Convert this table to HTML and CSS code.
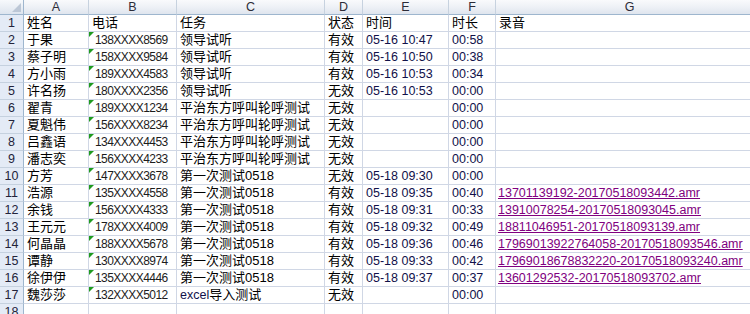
FILE: index.html
```html
<!DOCTYPE html>
<html lang="zh-CN">
<head>
<meta charset="utf-8">
<title>录音表</title>
<link rel="stylesheet" href="styles.css">
</head>
<body>
<div class="sheet">
  <div class="corner"></div>
  <div class="ch">A</div><div class="ch">B</div><div class="ch">C</div><div class="ch">D</div><div class="ch">E</div><div class="ch">F</div><div class="ch last">G</div>

  <div class="rh">1</div><div class="c">姓名</div><div class="c">电话</div><div class="c">任务</div><div class="c">状态</div><div class="c">时间</div><div class="c">时长</div><div class="c">录音</div>

  <div class="rh">2</div><div class="c">于果</div><div class="c ph">138XXXX8569</div><div class="c">领导试听</div><div class="c">有效</div><div class="c lt">05-16 10:47</div><div class="c lt">00:58</div><div class="c"></div>
  <div class="rh">3</div><div class="c">蔡子明</div><div class="c ph">158XXXX9584</div><div class="c">领导试听</div><div class="c">有效</div><div class="c lt">05-16 10:50</div><div class="c lt">00:38</div><div class="c"></div>
  <div class="rh">4</div><div class="c">方小雨</div><div class="c ph">189XXXX4583</div><div class="c">领导试听</div><div class="c">有效</div><div class="c lt">05-16 10:53</div><div class="c lt">00:34</div><div class="c"></div>
  <div class="rh">5</div><div class="c">许名扬</div><div class="c ph">180XXXX2356</div><div class="c">领导试听</div><div class="c">无效</div><div class="c lt">05-16 10:53</div><div class="c lt">00:00</div><div class="c"></div>
  <div class="rh">6</div><div class="c">翟青</div><div class="c ph">189XXXX1234</div><div class="c">平治东方呼叫轮呼测试</div><div class="c">无效</div><div class="c lt"></div><div class="c lt">00:00</div><div class="c"></div>
  <div class="rh">7</div><div class="c">夏魁伟</div><div class="c ph">156XXXX8234</div><div class="c">平治东方呼叫轮呼测试</div><div class="c">无效</div><div class="c lt"></div><div class="c lt">00:00</div><div class="c"></div>
  <div class="rh">8</div><div class="c">吕鑫语</div><div class="c ph">134XXXX4453</div><div class="c">平治东方呼叫轮呼测试</div><div class="c">无效</div><div class="c lt"></div><div class="c lt">00:00</div><div class="c"></div>
  <div class="rh">9</div><div class="c">潘志奕</div><div class="c ph">156XXXX4233</div><div class="c">平治东方呼叫轮呼测试</div><div class="c">无效</div><div class="c lt"></div><div class="c lt">00:00</div><div class="c"></div>
  <div class="rh">10</div><div class="c">方芳</div><div class="c ph">147XXXX3678</div><div class="c">第一次测试0518</div><div class="c">无效</div><div class="c lt">05-18 09:30</div><div class="c lt">00:00</div><div class="c"></div>
  <div class="rh">11</div><div class="c">浩源</div><div class="c ph">135XXXX4558</div><div class="c">第一次测试0518</div><div class="c">有效</div><div class="c lt">05-18 09:35</div><div class="c lt">00:40</div><div class="c lk"><a href="#">13701139192-20170518093442.amr</a></div>
  <div class="rh">12</div><div class="c">余钱</div><div class="c ph">156XXXX4333</div><div class="c">第一次测试0518</div><div class="c">有效</div><div class="c lt">05-18 09:31</div><div class="c lt">00:33</div><div class="c lk"><a href="#">13910078254-20170518093045.amr</a></div>
  <div class="rh">13</div><div class="c">王元元</div><div class="c ph">178XXXX4009</div><div class="c">第一次测试0518</div><div class="c">有效</div><div class="c lt">05-18 09:32</div><div class="c lt">00:49</div><div class="c lk"><a href="#">18811046951-20170518093139.amr</a></div>
  <div class="rh">14</div><div class="c">何晶晶</div><div class="c ph">188XXXX5678</div><div class="c">第一次测试0518</div><div class="c">有效</div><div class="c lt">05-18 09:36</div><div class="c lt">00:46</div><div class="c lk"><a href="#">17969013922764058-20170518093546.amr</a></div>
  <div class="rh">15</div><div class="c">谭静</div><div class="c ph">130XXXX8974</div><div class="c">第一次测试0518</div><div class="c">有效</div><div class="c lt">05-18 09:33</div><div class="c lt">00:42</div><div class="c lk"><a href="#">17969018678832220-20170518093240.amr</a></div>
  <div class="rh">16</div><div class="c">徐伊伊</div><div class="c ph">135XXXX4446</div><div class="c">第一次测试0518</div><div class="c">有效</div><div class="c lt">05-18 09:37</div><div class="c lt">00:37</div><div class="c lk"><a href="#">13601292532-20170518093702.amr</a></div>
  <div class="rh">17</div><div class="c">魏莎莎</div><div class="c ph">132XXXX5012</div><div class="c"><span class="lt">excel</span>导入测试</div><div class="c">无效</div><div class="c lt"></div><div class="c lt">00:00</div><div class="c"></div>
  <div class="rh">18</div><div class="c"></div><div class="c"></div><div class="c"></div><div class="c"></div><div class="c"></div><div class="c"></div><div class="c"></div>
</div>
</body>
</html>
```

FILE: styles.css
```css
html, body {
  margin: 0;
  padding: 0;
  background: #ffffff;
  overflow: hidden;
}

.sheet {
  display: grid;
  grid-template-columns: 24px 65px 88px 148px 38px 86px 47px 267px;
  grid-template-rows: 15px repeat(18, 17px);
  font-family: "Liberation Sans", "Noto Sans CJK SC", sans-serif;
  font-size: 13px;
  color: #000;
  width: 763px;
}

.corner {
  position: relative;
  box-sizing: border-box;
  background: linear-gradient(#f7f9fc, #dde4ee);
  border-right: 1px solid #9eb6ce;
  border-bottom: 1px solid #9eb6ce;
}

.corner::after {
  content: "";
  position: absolute;
  right: 2px;
  bottom: 2px;
  border-style: solid;
  border-width: 0 0 9px 9px;
  border-color: transparent transparent #bcc7d6 transparent;
}

.ch {
  box-sizing: border-box;
  background: linear-gradient(#f9fafc 0%, #eef1f6 50%, #dfe5ee 100%);
  border-right: 1px solid #c7d2df;
  border-bottom: 1px solid #9eb6ce;
  text-align: center;
  font-size: 12.5px;
  line-height: 14px;
  color: #2c2c38;
}

.ch.last {
  border-right: none;
}

.rh {
  box-sizing: border-box;
  background: #e4ebf6;
  border-right: 1px solid #9eb6ce;
  border-bottom: 1px solid #c5d1df;
  text-align: center;
  font-size: 12.5px;
  line-height: 16px;
  color: #23233a;
}

.c {
  position: relative;
  box-sizing: border-box;
  border-right: 1px solid #d0d7e5;
  border-bottom: 1px solid #d0d7e5;
  padding: 0 2px 0 3px;
  line-height: 16px;
  white-space: nowrap;
}

.lt {
  font-size: 12.5px;
  color: #11114a;
}

.ph {
  font-size: 12px;
  letter-spacing: -0.55px;
  color: #1c1c1c;
  padding-left: 6px;
}

.ph::before {
  content: "";
  position: absolute;
  left: 0;
  top: 0;
  border-style: solid;
  border-width: 5px 5px 0 0;
  border-color: #1f9a1f transparent transparent transparent;
}

.lk {
  padding-left: 2px;
  font-size: 12.5px;
}

.lk a {
  color: #800080;
  text-decoration: underline;
}
```
